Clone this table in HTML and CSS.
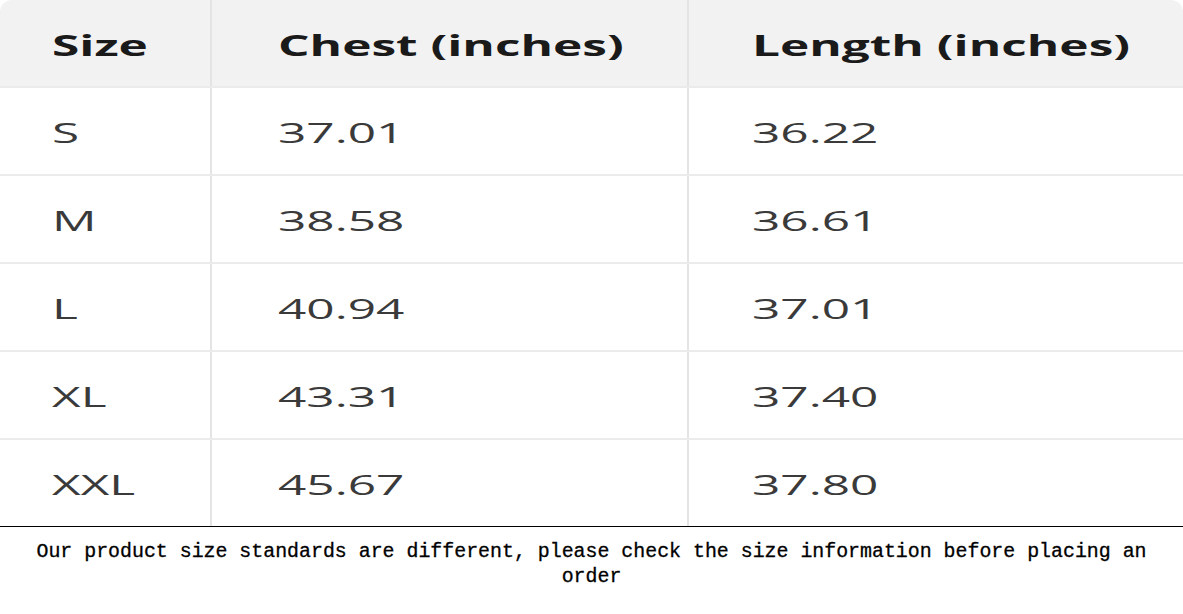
FILE: index.html
```html
<!DOCTYPE html>
<html lang="en">
<head>
<meta charset="utf-8">
<title>Size chart</title>
<link rel="stylesheet" href="styles.css">
</head>
<body>
<div class="chart">
  <table class="sizes">
    <colgroup>
      <col class="w1">
      <col class="w2">
      <col class="w3">
    </colgroup>
    <thead>
      <tr>
        <th class="c1"><span class="st">Size</span></th>
        <th class="c2"><span class="st">Chest (inches)</span></th>
        <th class="c3"><span class="st">Length (inches)</span></th>
      </tr>
    </thead>
    <tbody>
      <tr><td class="c1"><span class="st">S</span></td><td class="c2"><span class="st">37.01</span></td><td class="c3"><span class="st">36.22</span></td></tr>
      <tr><td class="c1"><span class="st">M</span></td><td class="c2"><span class="st">38.58</span></td><td class="c3"><span class="st">36.61</span></td></tr>
      <tr><td class="c1"><span class="st">L</span></td><td class="c2"><span class="st">40.94</span></td><td class="c3"><span class="st">37.01</span></td></tr>
      <tr><td class="c1"><span class="st">XL</span></td><td class="c2"><span class="st">43.31</span></td><td class="c3"><span class="st">37.40</span></td></tr>
      <tr class="last"><td class="c1"><span class="st">XXL</span></td><td class="c2"><span class="st">45.67</span></td><td class="c3"><span class="st">37.80</span></td></tr>
    </tbody>
  </table>
</div>
<p class="note">Our product size standards are different, please check the size information before placing an order</p>
</body>
</html>
```

FILE: styles.css
```css
html, body {
  margin: 0;
  padding: 0;
  background: #ffffff;
}

.chart {
  width: 1183px;
  border-bottom: 1px solid #000;
  border-radius: 12px 12px 0 0;
  overflow: hidden;
}

.sizes {
  width: 1183px;
  border-collapse: collapse;
  table-layout: fixed;
  font-family: "Open Sans", "DejaVu Sans", sans-serif;
}

.sizes .w1 { width: 211px; }
.sizes .w2 { width: 477px; }

.sizes th,
.sizes td {
  height: 86px;
  padding: 0;
  text-align: left;
  vertical-align: middle;
  border-bottom: 2px solid #ebebeb;
  border-left: 2px solid #e4e4e4;
  white-space: nowrap;
  overflow: hidden;
}

.sizes .c1 { padding-left: 52px; border-left: none; }
.sizes .c2 { padding-left: 66px; }
.sizes .c3 { padding-left: 63px; }

.sizes thead th {
  background: #f2f2f2;
  color: #1a1a1a;
  font-weight: 700;
  font-size: 28px;
  padding-top: 3px;
  height: 83px;
}

.sizes tbody td {
  color: #3a3a3a;
  font-weight: 400;
  font-size: 28px;
  padding-top: 1px;
  height: 85px;
}

.sizes tr.last td {
  height: 85px;
  border-bottom: none;
}

.st {
  display: inline-block;
  transform: scaleX(1.77);
  transform-origin: left center;
}

.note {
  margin: 0;
  padding: 12px 20px 0;
  text-align: center;
  font-family: "Liberation Mono", "DejaVu Sans Mono", monospace;
  font-size: 19.9px;
  line-height: 25px;
  color: #000;
  -webkit-text-stroke: 0.3px #000;
}
```
